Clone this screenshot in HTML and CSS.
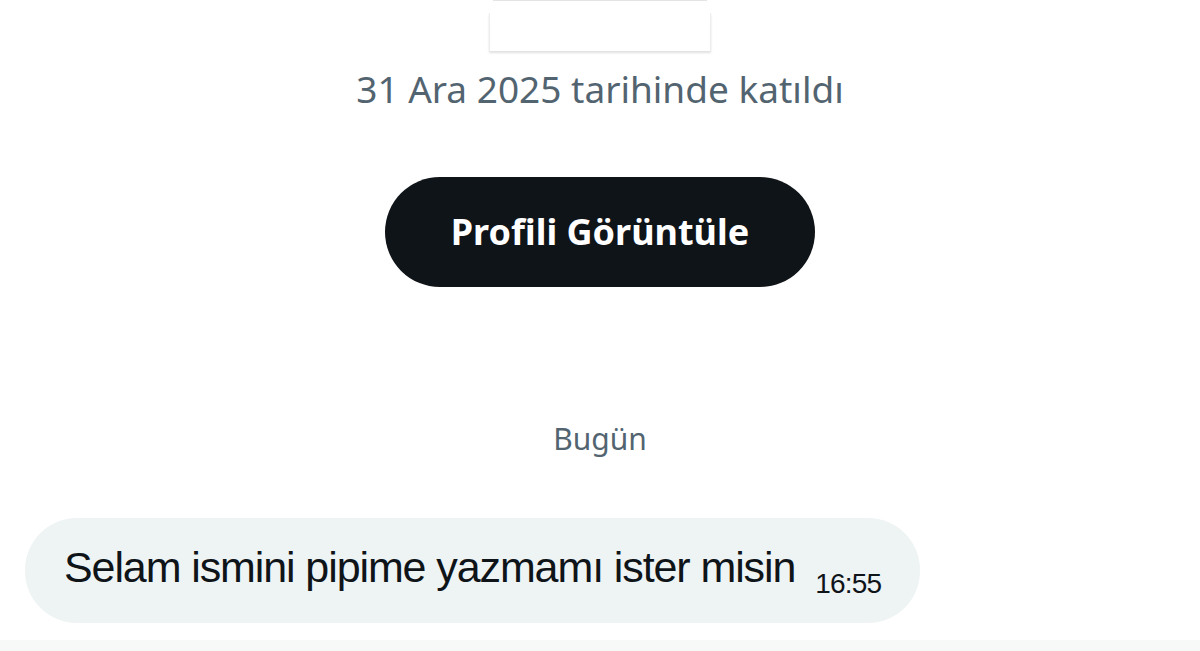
FILE: index.html
```html
<!DOCTYPE html>
<html lang="tr">
<head>
	<meta charset="UTF-8">
	<title>Mesaj</title>
	<link rel="stylesheet" href="styles.css">
</head>
<body>
	<div class="page">
		<div class="header">
			<div class="topline"></div>
			<div class="hidden-name"></div>
			<p class="joined">31 Ara 2025 tarihinde katıldı</p>
			<div class="profile-btn">Profili Görüntüle</div>
		</div>
		<p class="day">Bugün</p>
		<div class="bubble">
			<span class="msg">Selam ismini pipime yazmamı ister misin</span>
			<span class="time">16:55</span>
		</div>
		<div class="composer"></div>
	</div>
</body>
</html>
```

FILE: styles.css
```css
body {
	margin: 0;
	background-color: #fff;
	font-family: "Noto Sans", "Open Sans", sans-serif;
}

p {
	margin: 0;
	padding: 0;
}

.page {
	width: 1200px;
	height: 651px;
	overflow: hidden;
	display: flex;
	flex-direction: column;
}

.header {
	display: flex;
	flex-direction: column;
	align-items: center;
}

.topline {
	width: 214px;
	height: 1px;
	background-color: #e4e4e4;
}

.hidden-name {
	width: 220px;
	height: 38px;
	margin-top: 12px;
	background-color: #fff;
	border-left: 1px solid #ededed;
	border-right: 1px solid #ededed;
	box-shadow: 0 2px 2px rgba(0, 0, 0, 0.12);
}

.joined {
	margin-top: 16px;
	font-size: 37px;
	line-height: 44px;
	color: #536471;
}

.profile-btn {
	margin-top: 66px;
	width: 430px;
	height: 110px;
	border-radius: 55px;
	background-color: #0f1419;
	color: #fff;
	font-size: 36px;
	font-weight: bold;
	line-height: 110px;
	text-align: center;
}

.day {
	margin-top: 133px;
	text-align: center;
	font-size: 30px;
	line-height: 38px;
	color: #536471;
}

.bubble {
	margin-top: 60px;
	margin-left: 25px;
	width: 895px;
	height: 105px;
	box-sizing: border-box;
	border-radius: 52px;
	background-color: #eef3f4;
	padding-left: 39px;
	display: flex;
	align-items: center;
	font-family: "Liberation Sans", Arial, sans-serif;
	color: #0f1419;
}

.msg {
	font-size: 43px;
	letter-spacing: -1.1px;
	margin-top: -6px;
}

.time {
	font-size: 28px;
	margin-left: 20px;
	margin-top: 26px;
	letter-spacing: -0.8px;
}

.composer {
	margin-top: 17px;
	flex: 1;
	background-color: #f7f8f8;
}
```
